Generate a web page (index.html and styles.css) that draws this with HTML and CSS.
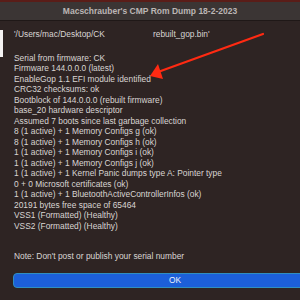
FILE: index.html
```html
<!DOCTYPE html>
<html lang="en">
<head>
    <meta charset="UTF-8">
    <title>CMP Rom Dump</title>
    <link rel="stylesheet" href="styles.css">
</head>
<body>
    <div class="window">
        <div class="titlebar">Macschrauber's CMP Rom Dump 18-2-2023</div>

        <div class="content">
            <div class="path"><span class="path-start">'/Users/mac/Desktop/CK</span><span>rebuilt_gop.bin'</span></div>

            <div class="report">
                <div>Serial from firmware: CK</div>
                <div>Firmware 144.0.0.0 (latest)</div>
                <div>EnableGop 1.1 EFI module identified</div>
                <div>CRC32 checksums: ok</div>
                <div>Bootblock of 144.0.0.0 (rebuilt firmware)</div>
                <div>base_20 hardware descriptor</div>
                <div>Assumed 7 boots since last garbage collection</div>
                <div>8 (1 active) + 1 Memory Configs g (ok)</div>
                <div>8 (1 active) + 1 Memory Configs h (ok)</div>
                <div>1 (1 active) + 1 Memory Configs i (ok)</div>
                <div>1 (1 active) + 1 Memory Configs j (ok)</div>
                <div>1 (1 active) + 1 Kernel Panic dumps type A: Pointer type</div>
                <div>0 + 0 Microsoft certificates (ok)</div>
                <div>1 (1 active) + 1 BluetoothActiveControllerInfos (ok)</div>
                <div>20191 bytes free space of 65464</div>
                <div>VSS1 (Formatted) (Healthy)</div>
                <div>VSS2 (Formatted) (Healthy)</div>
            </div>

            <div class="note">Note: Don't post or publish your serial number</div>

            <div class="ok-button">OK</div>
        </div>

        <!-- window peeking out behind the dialog -->
        <div class="behind"></div>

        <!-- red annotation arrow drawn over the text -->
        <svg class="arrow" width="300" height="300" viewBox="0 0 300 300">
            <line x1="263" y1="34" x2="158" y2="72" stroke="#ff2a12" stroke-width="2.2" stroke-linecap="round"/>
            <polygon points="150,76 158,64 163,79" fill="#ff2a12"/>
        </svg>
    </div>
</body>
</html>
```

FILE: styles.css
```css
body {
    margin: 0;
    padding: 0;
    background-color: #2e2423;
    font-family: "Liberation Sans", Arial, sans-serif;
    overflow: hidden;
}

.window {
    position: relative;
    width: 300px;
    height: 300px;
    overflow: hidden;
}

.titlebar {
    height: 18px;
    line-height: 18px;
    border-top: 2px solid #5a1d18;
    border-bottom: 1px solid #1f1817;
    background-color: #3b3534;
    color: #bcb6b4;
    font-size: 8.5px;
    font-weight: bold;
    text-align: center;
}

.content {
    padding: 8px 0 0 14px;
    color: #d9d5d3;
    font-size: 8.4px;
    line-height: 10.5px;
    white-space: nowrap;
}

.path {
    display: flex;
}

.path-start {
    width: 139px;
}

.report {
    margin-top: 13px;
}

.note {
    margin-top: 20px;
}

.ok-button {
    width: 322px;
    height: 13px;
    margin: 11px 0 0 -1px;
    background-color: #1c5fd9;
    color: #eef2fb;
    border: 1.5px solid #2f8ec0;
    border-radius: 4px;
    line-height: 13px;
    text-align: center;
}

.behind {
    position: absolute;
    left: 0;
    top: 30px;
    width: 3px;
    height: 27px;
    background-color: #f4f2f2;
}

.arrow {
    position: absolute;
    left: 0;
    top: 0;
}
```
